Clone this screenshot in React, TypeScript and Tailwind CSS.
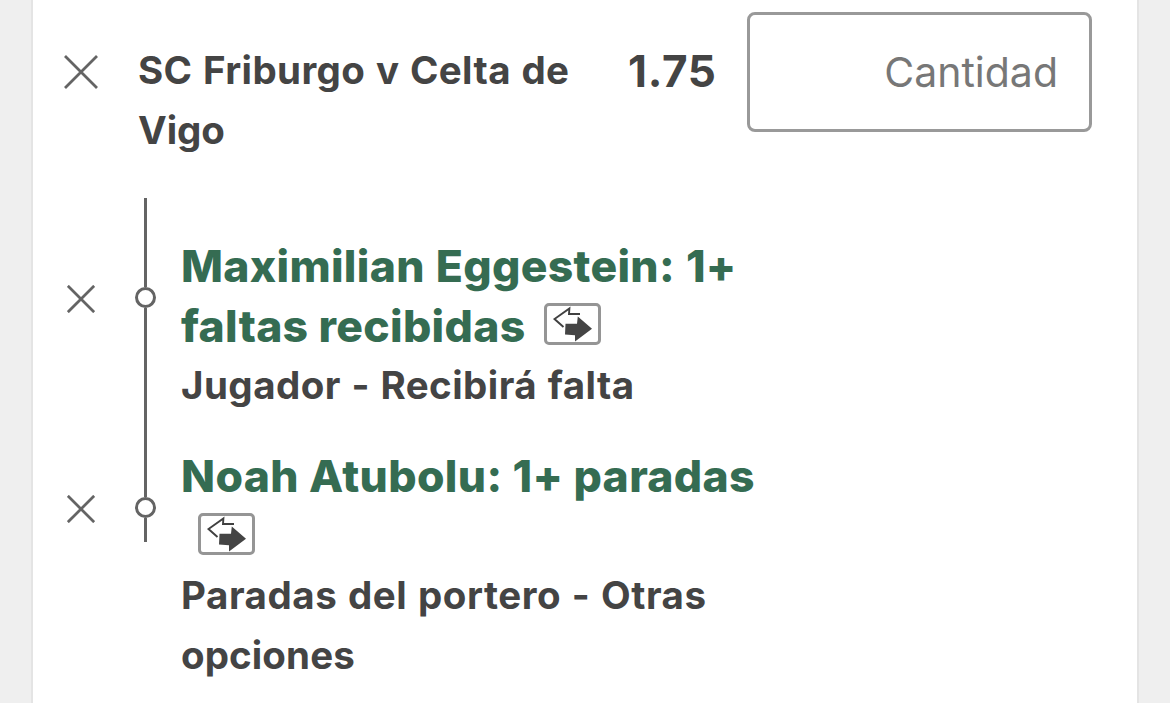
const CloseIcon = ({ size }: { size: number }) => (
  <svg width={size} height={size} viewBox="0 0 34 34" fill="none" stroke="#646464" strokeWidth={(2.8 * 34) / size}>
    <path d="M1 1L33 33M33 1L1 33" />
  </svg>
);

const SwapBadge = () => (
  <span className="mb-1 inline-flex h-[42px] w-[57px] rounded-[5px] border-3 border-[#959595]">
    <svg width="51" height="36" viewBox="3 3 51 36">
      <path d="M19.5 24L10.5 16L25.4 5.5L25 11H36" fill="none" stroke="#404040" strokeWidth="1.9" />
      <path d="M21.5 20.7H33L33.8 13.5L48 25.7L31 38.5V32.2L21 31.5Z" fill="#444444" />
    </svg>
  </span>
);

const Dot = () => (
  <span className="h-[21px] w-[21px] rounded-full border-3 border-[#646464] bg-white" />
);

const App = () => {
  return (
    <div className="h-[703px] w-[1170px] overflow-hidden bg-[#efefef] px-[31px] font-['Inter',sans-serif] text-[#444444] [font-feature-settings:'calt'_0]">
      <div className="h-full border-x-2 border-[#e4e4e4] bg-white">
        <div className="flex h-[198px] pt-3">
          <div className="w-[106px] pl-[31px] pt-[43px]">
            <CloseIcon size={34} />
          </div>
          <h2 className="-ml-px w-[490px] pt-[28px] text-[38.5px] font-bold leading-[60px] tracking-[0.4px] [word-spacing:1px]">
            SC Friburgo v Celta de
            <br />
            <span className="tracking-[-0.1px]">Vigo</span>
          </h2>
          <div className="w-[119px] pt-[29px] text-[44px] font-bold leading-[60px] tracking-[0.7px]">1.75</div>
          <input
            placeholder="Cantidad"
            className="h-[120px] w-[345px] rounded-[8px] border-3 border-[#999999] pr-[31px] text-right text-[41px] placeholder:text-[#777777]"
          />
        </div>
        <div className="flex">
          <div className="flex w-[102px] flex-col gap-[182px] pl-[34px] pt-[87px]">
            <CloseIcon size={28} />
            <CloseIcon size={28} />
          </div>
          <div className="flex h-[344px] w-[21px] flex-col items-center">
            <span className="h-[89px] w-[3px] bg-[#646464]" />
            <Dot />
            <span className="h-[189px] w-[3px] bg-[#646464]" />
            <Dot />
            <span className="h-[24px] w-[3px] bg-[#646464]" />
          </div>
          <div className="pl-[25px] pt-[38px] text-[38.5px] font-bold leading-[60px]">
            <h3 className="text-[44.5px] font-extrabold tracking-[0.3px] text-[#356c52] [word-spacing:1px]">
              Maximilian Eggestein: 1+
            </h3>
            <div className="flex h-[60px] items-center">
              <h3 className="w-[363px] text-[44.5px] font-extrabold tracking-[0.3px] text-[#356c52]">faltas recibidas</h3>
              <SwapBadge />
            </div>
            <p className="-mt-px tracking-[0.45px] [word-spacing:1px]">Jugador - Recibirá falta</p>
            <h3 className="mt-[31px] text-[44.5px] font-extrabold tracking-[0.35px] text-[#356c52]">
              Noah Atubolu: 1+ paradas
            </h3>
            <div className="flex h-[60px] items-center pl-[17px]">
              <SwapBadge />
            </div>
            <p className="-mt-px tracking-[0.55px] [word-spacing:1px]">
              Paradas del portero - Otras
              <br />
              <span className="tracking-[0.1px]">opciones</span>
            </p>
          </div>
        </div>
      </div>
    </div>
  );
};

export default App;
